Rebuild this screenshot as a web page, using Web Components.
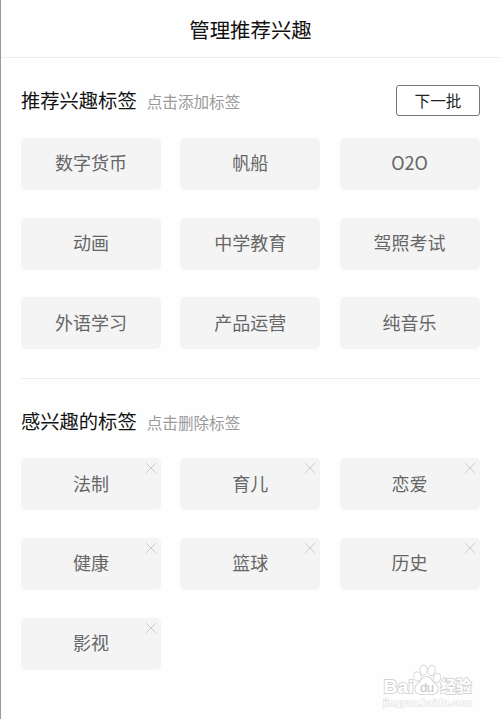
<!DOCTYPE html>
<html lang="zh-CN">
<head>
<meta charset="utf-8">
<title>管理推荐兴趣</title>
<style>
  body {
    margin: 0;
    background: #fdfdfd;
    font-family: "Noto Sans CJK SC", sans-serif;
  }
</style>
</head>
<body>
<interest-page></interest-page>

<script>
class InterestTag extends HTMLElement {
  constructor() {
    super();
    this.attachShadow({ mode: 'open' });
    this.shadowRoot.innerHTML = `
      <style>
        :host {
          position: relative;
          display: flex;
          align-items: center;
          justify-content: center;
          box-sizing: border-box;
          height: 52px;
          padding-bottom: 3.4px;
          border-radius: 5px;
          background: #f4f4f4;
          color: #666;
          font-size: 18px;
          line-height: 26px;
          cursor: pointer;
        }
        svg {
          display: none;
          position: absolute;
          top: 4px;
          right: 4px;
          width: 12px;
          height: 12px;
        }
        :host([removable]) svg {
          display: block;
        }
      </style>
      <slot></slot>
      <svg viewBox="0 0 12 12" fill="none" stroke="#ccc" stroke-width="1">
        <path d="M1 1L11 11M11 1L1 11"/>
      </svg>
    `;
  }
}

class TagSection extends HTMLElement {
  constructor() {
    super();
    this.attachShadow({ mode: 'open' });
    this.shadowRoot.innerHTML = `
      <style>
        :host {
          display: block;
        }
        header {
          display: flex;
          align-items: center;
          height: 31px;
          margin-bottom: 22px;
        }
        .heading {
          display: flex;
          align-items: baseline;
          gap: 10px;
          flex: 1;
          padding-bottom: 0.4px;
        }
        h2 {
          margin: 0;
          font-size: 19.3px;
          font-weight: 400;
          line-height: 28px;
          color: #111;
        }
        .hint {
          font-size: 15.6px;
          line-height: 24px;
          color: #999;
        }
        .tags {
          display: grid;
          grid-template-columns: repeat(3, 140px);
          column-gap: 19.3px;
          row-gap: 27.7px;
        }
      </style>
      <header>
        <div class="heading">
          <h2></h2>
          <span class="hint"></span>
        </div>
        <slot name="action"></slot>
      </header>
      <div class="tags"><slot></slot></div>
    `;
  }

  connectedCallback() {
    this.shadowRoot.querySelector('h2').textContent = this.getAttribute('heading');
    this.shadowRoot.querySelector('.hint').textContent = this.getAttribute('hint');
  }
}

class NextButton extends HTMLElement {
  constructor() {
    super();
    this.attachShadow({ mode: 'open' });
    this.shadowRoot.innerHTML = `
      <style>
        :host {
          display: block;
        }
        button {
          display: block;
          box-sizing: border-box;
          width: 84px;
          height: 31px;
          padding: 0;
          border: 1px solid #777;
          border-radius: 3px;
          background: #fff;
          color: #222;
          font-family: inherit;
          font-size: 15.6px;
          line-height: 29px;
        }
      </style>
      <button type="button"><slot></slot></button>
    `;
  }
}

class SiteMark extends HTMLElement {
  constructor() {
    super();
    this.attachShadow({ mode: 'open' });
    this.shadowRoot.innerHTML = `
      <style>
        :host {
          display: block;
          width: 96px;
          height: 48px;
        }
        svg {
          display: block;
        }
      </style>
      <svg width="96" height="48" viewBox="0 0 96 48" fill="#fff" stroke="#d4d4d4" stroke-width="1.8" paint-order="stroke" font-family="Liberation Sans, Noto Sans CJK SC, sans-serif" font-weight="700">
        <text x="3.5" y="29.5" font-size="19" textLength="30" lengthAdjust="spacingAndGlyphs">Bai</text>
        <text x="60.5" y="29" font-size="16" textLength="31" lengthAdjust="spacingAndGlyphs">经验</text>
        <ellipse cx="37.5" cy="13.5" rx="3.2" ry="4.2" transform="rotate(-15 37.5 13.5)"/>
        <ellipse cx="43.5" cy="7" rx="3.2" ry="4.6"/>
        <ellipse cx="51.5" cy="7.5" rx="3.2" ry="4.6" transform="rotate(10 51.5 7.5)"/>
        <ellipse cx="57" cy="15" rx="3.2" ry="4.2" transform="rotate(20 57 15)"/>
        <path d="M46.5 14C42 14 41.5 18 38 21C33 25 35 31 41 31C45 30.5 48 30.5 52 31C58 31 60 25 55 21C51.5 18 51 14 46.5 14Z"/>
        <text x="40" y="28.5" font-size="13" font-weight="400" fill="#c4c4c4" stroke="none" textLength="14">du</text>
        <text x="3" y="42.5" font-size="9" fill="#fff" stroke="#e2e2e2" stroke-width="1.2" textLength="89" lengthAdjust="spacingAndGlyphs">jingyan.baidu.com</text>
      </svg>
    `;
  }
}

class InterestPage extends HTMLElement {
  constructor() {
    super();
    this.attachShadow({ mode: 'open' });
    this.shadowRoot.innerHTML = `
      <style>
        :host {
          display: block;
          position: relative;
          box-sizing: border-box;
          height: 719px;
          border-left: 1px solid #999;
          background: #fefefe;
        }
        .title {
          box-sizing: border-box;
          height: 58px;
          margin: 0;
          padding-top: 1px;
          border-bottom: 1px solid #eee;
          color: #111;
          font-size: 20.4px;
          font-weight: 400;
          line-height: 57px;
          text-align: center;
        }
        main {
          padding: 27px 20px 0;
        }
        hr {
          height: 1px;
          margin: 29px 0 26px;
          border: 0;
          background: #eee;
        }
        site-mark {
          position: absolute;
          right: 24px;
          bottom: 8px;
        }
      </style>
      <h1 class="title">管理推荐兴趣</h1>
      <main>
        <tag-section heading="推荐兴趣标签" hint="点击添加标签">
          <next-button slot="action">下一批</next-button>
          <interest-tag>数字货币</interest-tag>
          <interest-tag>帆船</interest-tag>
          <interest-tag>O2O</interest-tag>
          <interest-tag>动画</interest-tag>
          <interest-tag>中学教育</interest-tag>
          <interest-tag>驾照考试</interest-tag>
          <interest-tag>外语学习</interest-tag>
          <interest-tag>产品运营</interest-tag>
          <interest-tag>纯音乐</interest-tag>
        </tag-section>
        <hr>
        <tag-section heading="感兴趣的标签" hint="点击删除标签">
          <interest-tag removable>法制</interest-tag>
          <interest-tag removable>育儿</interest-tag>
          <interest-tag removable>恋爱</interest-tag>
          <interest-tag removable>健康</interest-tag>
          <interest-tag removable>篮球</interest-tag>
          <interest-tag removable>历史</interest-tag>
          <interest-tag removable>影视</interest-tag>
        </tag-section>
      </main>
      <site-mark></site-mark>
    `;
  }
}

customElements.define('interest-tag', InterestTag);
customElements.define('tag-section', TagSection);
customElements.define('next-button', NextButton);
customElements.define('site-mark', SiteMark);
customElements.define('interest-page', InterestPage);
</script>
</body>
</html>
